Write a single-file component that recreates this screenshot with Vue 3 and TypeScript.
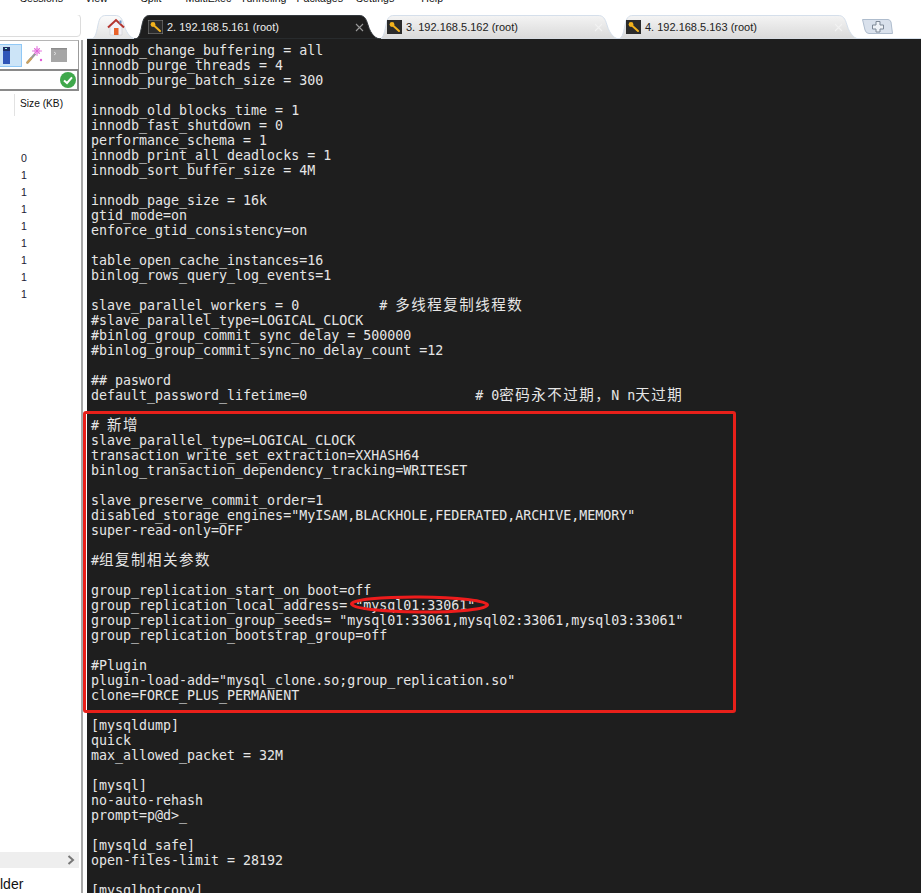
<script setup lang="ts">
interface Seg { text: string; cjk: boolean }

const menus = [
  { label: 'Sessions', gap: 20 },
  { label: 'View', gap: 22 },
  { label: 'Split', gap: 33 },
  { label: 'MultiExec', gap: 24 },
  { label: 'Tunneling', gap: 9 },
  { label: 'Packages', gap: 10 },
  { label: 'Settings', gap: 13 },
  { label: 'Help', gap: 27 },
]

const tabs = [
  { label: '2. 192.168.5.161 (root)', width: 247, active: true },
  { label: '3. 192.168.5.162 (root)', width: 242, active: false },
  { label: '4. 192.168.5.163 (root)', width: 243, active: false },
]

const tabPath = (w: number): string =>
  `M0,24 C5,24 6,20 8,10 C9.5,3 11,.5 16,.5 H${w - 22} C${w - 17},.5 ${w - 15},3 ${w - 13},10 C${w - 10},20 ${w - 5},24 ${w},24 Z`

const sizes = ['0', '1', '1', '1', '1', '1', '1', '1', '1']

const source = `innodb_change_buffering = all
innodb_purge_threads = 4
innodb_purge_batch_size = 300

innodb_old_blocks_time = 1
innodb_fast_shutdown = 0
performance_schema = 1
innodb_print_all_deadlocks = 1
innodb_sort_buffer_size = 4M

innodb_page_size = 16k
gtid_mode=on
enforce_gtid_consistency=on

table_open_cache_instances=16
binlog_rows_query_log_events=1

slave_parallel_workers = 0          # 多线程复制线程数
#slave_parallel_type=LOGICAL_CLOCK
#binlog_group_commit_sync_delay = 500000
#binlog_group_commit_sync_no_delay_count =12

## pasword
default_password_lifetime=0                     # 0密码永不过期，N n天过期

# 新增
slave_parallel_type=LOGICAL_CLOCK
transaction_write_set_extraction=XXHASH64
binlog_transaction_dependency_tracking=WRITESET

slave_preserve_commit_order=1
disabled_storage_engines="MyISAM,BLACKHOLE,FEDERATED,ARCHIVE,MEMORY"
super-read-only=OFF

#组复制相关参数

group_replication_start_on_boot=off
group_replication_local_address= "mysql01:33061"
group_replication_group_seeds= "mysql01:33061,mysql02:33061,mysql03:33061"
group_replication_bootstrap_group=off

#Plugin
plugin-load-add="mysql_clone.so;group_replication.so"
clone=FORCE_PLUS_PERMANENT

[mysqldump]
quick
max_allowed_packet = 32M

[mysql]
no-auto-rehash
prompt=p@d>_

[mysqld_safe]
open-files-limit = 28192

[mysqlhotcopy]`

const toSegments = (line: string): Seg[] =>
  (line.match(/[\u3000-\u9fff\uff00-\uffef]+|[^\u3000-\u9fff\uff00-\uffef]+/g) ?? []).map((text) => ({
    text,
    cjk: /[\u3000-\u9fff\uff00-\uffef]/.test(text),
  }))

const lines = source.split('\n').map(toSegments)
</script>

<template>
  <div class="app">
    <nav class="menu">
      <span v-for="m in menus" :key="m.label" class="menu-item" :style="{ marginLeft: m.gap + 'px' }">{{ m.label }}</span>
    </nav>
    <div class="workspace">
      <aside class="side">
        <div class="search"></div>
        <div class="panel">
          <div class="toolbar">
            <button class="tool selected">
              <svg width="8" height="17" viewBox="0 0 8 17"><rect width="7" height="17" fill="#2f55b8" /><rect width="7" height="4" fill="#1f2f66" /><rect x="2" y="1" width="2" height="1" fill="#9fd" /></svg>
            </button>
            <svg class="wand" width="18" height="18" viewBox="0 0 18 18">
              <path d="M1.5 16.5 L9 8" stroke="#9a9a9a" stroke-width="2.4" stroke-linecap="round" />
              <path d="M1.5 16.5 L5 12.6" stroke="#c9a15f" stroke-width="2.4" stroke-linecap="round" />
              <circle cx="11" cy="5" r="3.2" fill="#f3c4ee" />
              <path d="M11 0 V10 M6 5 H16 M8 2 L14 8 M14 2 L8 8" stroke="#e05bd8" stroke-width=".8" />
              <circle cx="15" cy="14" r="1.2" fill="#e05bd8" />
            </svg>
            <svg class="term" width="16" height="14" viewBox="0 0 16 14">
              <rect width="16" height="14" fill="#a6a6a6" />
              <rect width="16" height="1.5" fill="#8c8c8c" />
              <path d="M3 4 L5 5.5 L3 7" stroke="#e8e8e8" fill="none" stroke-width=".8" />
            </svg>
          </div>
          <div class="filter">
            <svg width="16" height="16" viewBox="0 0 16 16">
              <circle cx="8" cy="8" r="8" fill="#3fa84b" />
              <path d="M4 8.4 L7 11 L12 5.4" stroke="#fff" stroke-width="2" fill="none" />
            </svg>
          </div>
          <div class="col-head"><span class="col-title">Size (KB)</span></div>
          <ul class="sizes">
            <li v-for="(s, i) in sizes" :key="i">{{ s }}</li>
          </ul>
          <div class="hscroll">
            <svg width="8" height="10" viewBox="0 0 8 10"><path d="M1.5 1 L6 5 L1.5 9" stroke="#777" stroke-width="2" fill="none" /></svg>
          </div>
          <div class="footer">lder</div>
        </div>
      </aside>
      <main class="main">
        <div class="tabstrip">
          <div class="tab home">
            <svg class="tab-bg" width="47" height="24" viewBox="0 0 47 24">
              <defs><linearGradient id="homeFill" x1="0" y1="0" x2="0" y2="1"><stop offset="0" stop-color="#fbfbfb" /><stop offset="1" stop-color="#e2e2e2" /></linearGradient></defs>
              <path :d="tabPath(47)" fill="url(#homeFill)" stroke="#d5dfeb" />
            </svg>
            <svg class="home-icon" width="18" height="18" viewBox="0 0 18 18">
              <path d="M3 8 V17 H15 V8 L9 3 Z" fill="#f1f1f6" stroke="#c9c9d2" stroke-width=".6" />
              <path d="M1 9.5 L9 2 L17 9.5" fill="none" stroke="#b5352f" stroke-width="2" />
              <rect x="7" y="10" width="4.5" height="7" fill="#e8622a" />
              <rect x="12.5" y="2.5" width="2" height="3" fill="#6a93c8" />
            </svg>
          </div>
          <div v-for="(t, i) in tabs" :key="t.label" class="tab" :class="{ active: t.active }" :style="{ width: t.width + 'px' }">
            <svg class="tab-bg" :width="t.width" height="24" :viewBox="`0 0 ${t.width} 24`">
              <defs><linearGradient :id="`tabFill${i}`" x1="0" y1="0" x2="0" y2="1"><stop offset="0" stop-color="#f4f4f4" /><stop offset="1" stop-color="#d9d9d9" /></linearGradient></defs>
              <path :d="tabPath(t.width)" :fill="t.active ? '#1e1e1e' : `url(#tabFill${i})`" :stroke="t.active ? '#33383d' : '#d5dfeb'" />
            </svg>
            <svg class="key" :class="{ framed: t.active }" width="15" height="14" viewBox="0 0 15 14">
              <rect width="15" height="14" fill="#2b2b2b" :stroke="t.active ? '#8a8a8a' : 'none'" />
              <path d="M6.5 6 L12 11" stroke="#f2b21c" stroke-width="2" stroke-linecap="round" />
              <circle cx="5" cy="4.5" r="2.4" fill="#f2b21c" />
            </svg>
            <span class="tab-label">{{ t.label }}</span>
            <span class="close">
              <svg width="9" height="9" viewBox="0 0 9 9"><path d="M1 1 L8 8 M8 1 L1 8" stroke="currentColor" stroke-width="1.1" /></svg>
            </span>
          </div>
          <div class="add">
            <svg width="31" height="15" viewBox="0 0 31 15">
              <path d="M.5 .5 H26 Q28 .5 29 3 L30.5 14.5 H7 Q4 14.5 3 11 Z" fill="#d9e1ec" stroke="#aebccd" />
              <path d="M14 2.5 H18 V6 H21.5 V10 H18 V13 H14 V10 H10.5 V6 H14 Z" fill="#eef2f7" stroke="#7d8896" />
            </svg>
          </div>
        </div>
        <div class="terminal">
          <div v-for="(segs, i) in lines" :key="i" class="line">
            <span v-for="(s, j) in segs" :key="j" :class="{ cjk: s.cjk }">{{ s.text }}</span>
          </div>
        </div>
        <div class="note-box"></div>
        <svg class="note-ring" width="141" height="21" viewBox="0 0 141 21">
          <ellipse cx="70.5" cy="10.5" rx="68" ry="7.5" fill="none" stroke="#ee1c1c" stroke-width="3" />
        </svg>
      </main>
    </div>
  </div>
</template>

<style>
html, body { background: #fff; }
</style>

<style scoped>
.app {
  width: 921px;
  height: 893px;
  overflow: hidden;
  display: flex;
  flex-direction: column;
  background: #fff;
  font-family: "Liberation Sans", Arial, sans-serif;
  color: #111;
}
.menu {
  height: 15px;
  flex: none;
  display: flex;
  overflow: hidden;
  font-size: 10.6px;
  line-height: 12px;
}
.menu-item { margin-top: -8px; white-space: nowrap; height: 12px; }
.workspace { flex: 1; display: flex; min-height: 0; }
.side { width: 87px; flex: none; display: flex; flex-direction: column; overflow: hidden; }
.search {
  width: 90px;
  height: 21px;
  margin: -1px 0 0 -11px;
  border: 1px solid #dcdcdc;
  border-radius: 4px;
  flex: none;
}
.panel {
  flex: 1;
  width: 81px;
  margin-top: 3px;
  border-right: 2px solid #a9a9a9;
  display: flex;
  flex-direction: column;
  min-height: 0;
}
.toolbar {
  height: 29px;
  width: 79px;
  flex: none;
  border-top: 1px solid #b5b5b5;
  border-right: 1px solid #9b9b9b;
  display: flex;
  align-items: center;
  box-sizing: border-box;
}
.tool {
  width: 22px;
  height: 23px;
  margin: 0;
  padding: 0 0 0 3px;
  border: 1px solid #90c8f6;
  border-left: none;
  background: #cce4f7;
  display: flex;
  align-items: center;
}
.wand { margin-left: 4px; }
.term { margin-left: 7px; }
.filter {
  height: 22px;
  width: 79px;
  flex: none;
  box-sizing: border-box;
  border-top: 2px solid #8a8a8a;
  border-bottom: 2px solid #8a8a8a;
  border-right: 2px solid #8a8a8a;
  display: flex;
  align-items: center;
  justify-content: flex-end;
  padding-right: 1px;
}
.col-head {
  margin: 3px 0 0 14px;
  height: 22px;
  flex: none;
  border-left: 1px solid #e2e2e2;
  padding-left: 5px;
  font-size: 10.2px;
  line-height: 19px;
}
.col-title { white-space: nowrap; }
.sizes {
  list-style: none;
  margin: 34px 0 0;
  padding: 0 0 0 21px;
  font-size: 10.6px;
  line-height: 17px;
  color: #1c2233;
  flex: 1;
}
.hscroll {
  height: 16px;
  width: 79px;
  flex: none;
  background: #eeeeee;
  display: flex;
  align-items: center;
  justify-content: flex-end;
  padding-right: 4px;
  box-sizing: border-box;
}
.footer {
  height: 25px;
  flex: none;
  font-size: 14px;
  line-height: 32px;
}
.main { flex: 1; min-width: 0; position: relative; display: flex; flex-direction: column; }
.tabstrip {
  height: 24px;
  flex: none;
  display: flex;
  padding-left: 3px;
  box-shadow: inset 0 -1px 0 #d9e2ec;
}
.tab {
  position: relative;
  height: 24px;
  flex: none;
  display: flex;
  align-items: center;
  font-size: 11px;
  color: #222;
  margin-left: -3px;
  padding-left: 9px;
  box-sizing: border-box;
}
.tab.active { color: #eee; z-index: 2; padding-left: 14px; }
.tab.home { width: 47px; margin-left: 0; padding-left: 17px; }
.tab-bg { position: absolute; left: 0; top: 0; }
.home-icon, .key, .tab-label, .close { position: relative; }
.key { flex: none; }
.tab-label { margin-left: 4px; white-space: nowrap; }
.close {
  position: absolute;
  right: 17px;
  top: 8px;
  color: #f2f2f2;
  display: flex;
}
.tab.active .close { color: #9a9a9a; }
.add { margin: 4px 0 0 2px; }
.add svg { display: block; }
.terminal {
  flex: 1;
  min-height: 0;
  overflow: hidden;
  background: #1e1e1e;
  padding: 4px 0 0 4px;
  color: #e6e6e6;
  font-family: "DejaVu Sans Mono", "Liberation Mono", monospace;
  font-size: 13.3px;
}
.line {
  height: 15px;
  line-height: 15px;
  white-space: pre;
}
.cjk {
  font-family: "Noto Sans CJK SC", sans-serif;
  font-size: 14.5px;
  letter-spacing: 1.5px;
  line-height: 0;
}
.note-box {
  position: absolute;
  left: -4px;
  top: 396px;
  width: 647px;
  height: 296px;
  border: 3px solid #e8201a;
  border-radius: 3px;
  pointer-events: none;
}
.note-ring {
  position: absolute;
  left: 262px;
  top: 579px;
  transform: rotate(.4deg);
}
</style>
